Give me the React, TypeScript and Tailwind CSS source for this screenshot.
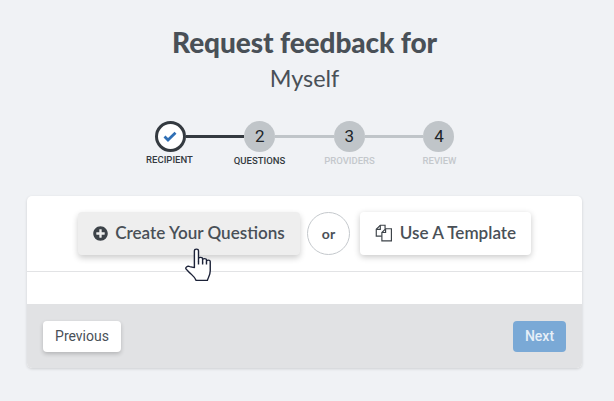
import { FaPlusCircle } from "react-icons/fa";

const steps = [
  { label: "RECIPIENT", color: "text-[#343a40]" },
  { label: "QUESTIONS", color: "text-[#343a40]" },
  { label: "PROVIDERS", color: "text-[#c4c8cc]" },
  { label: "REVIEW", color: "text-[#c4c8cc]" },
];

function Num({ n }: { n: number }) {
  return (
    <div className="flex h-[31px] w-[31px] shrink-0 items-center justify-center rounded-full bg-[#c0c5c9] font-['Roboto',sans-serif] text-[17px] font-normal text-[#212529]">
      {n}
    </div>
  );
}

export default function App() {
  return (
    <div className="h-[401px] w-[614px] overflow-hidden bg-[#f0f2f5]">
      <div className="flex w-[609px] flex-col items-center font-['Lato',sans-serif] text-[#495057]">
        <h1 className="mt-[23px] text-[28px] leading-[38px] font-black tracking-[-0.1px]">Request feedback for</h1>
        <div className="mt-[3px] text-[23.4px] leading-[28px]">Myself</div>

        <div className="mt-[29px] flex items-center">
          <div className="flex h-[31px] w-[31px] shrink-0 items-center justify-center rounded-full border-[3px] border-[#343a40] bg-white">
            <svg width="14" height="11" viewBox="0 0 14 11">
              <path d="M1.5 5.5 L5 9 L12.5 1.8" fill="none" stroke="#2f6fb5" strokeWidth="2.8" />
            </svg>
          </div>
          <div className="h-[3px] w-[58.67px] bg-[#343a40]" />
          <Num n={2} />
          <div className="h-[3px] w-[58.67px] bg-[#c0c5c9]" />
          <Num n={3} />
          <div className="h-[3px] w-[58.67px] bg-[#c0c5c9]" />
          <Num n={4} />
        </div>
        <div className="mt-[3px] flex font-['Roboto',sans-serif]">
          {steps.map((s, i) => (
            <div
              key={s.label}
              className={`w-[90px] text-center text-[9.5px] leading-[12px] font-medium ${s.color} ${i === 0 ? "mt-[-1px]" : ""}`}
            >
              {s.label}
            </div>
          ))}
        </div>

        <div className="mt-[29px] flex h-[172px] w-[555px] flex-col overflow-hidden rounded-[5px] bg-white shadow-[0_1px_3px_rgba(0,0,0,0.15)]">
          <div className="relative flex h-[76px] shrink-0 items-center justify-center border-b border-[#e2e3e5] pb-[1px]">
            <div className="flex h-[43px] w-[222px] items-center justify-center gap-[7px] rounded-[4px] bg-[#eeeeee] text-[17.1px] font-semibold shadow-[0_3px_6px_rgba(0,0,0,0.2)]">
              <FaPlusCircle className="h-[15px] w-[15px] text-[#3d4349]" />
              <span>Create Your Questions</span>
            </div>
            <div className="ml-[7px] mr-[10px] flex h-[43px] w-[43px] items-center justify-center rounded-full border border-[#c4c8cc] text-[14px] font-bold">
              or
            </div>
            <div className="flex h-[43px] w-[171px] items-center justify-center gap-[7px] rounded-[4px] bg-white text-[17.1px] font-semibold shadow-[0_2px_6px_rgba(0,0,0,0.22)]">
              <svg width="18" height="18" viewBox="0 0 17 17" fill="none" stroke="#3d4349" strokeWidth="1.1">
                <path d="M6.5 11.5 H1.2 V5 L5 1.2 H9.5 V4.5" />
                <path d="M5 1.2 V5 H1.2" />
                <path d="M6.5 16 V8 L10 4.5 H15.5 V16 Z" fill="#fff" />
                <path d="M10 4.5 V8 H6.5" />
              </svg>
              <span>Use A Template</span>
            </div>
            <svg
              className="absolute left-[158px] top-[52px]"
              width="27"
              height="33"
              viewBox="0 0 23 32"
              preserveAspectRatio="none"
              fill="#fff"
              stroke="#1c2238"
              strokeWidth="1.2"
              strokeLinejoin="round"
            >
              <path d="M8 19 V3 C8 0.6 11.5 0.6 11.5 3 V13 V10.5 C11.5 8.6 15 8.6 15 10.5 V13.5 V11.5 C15 9.8 18.3 9.8 18.3 11.5 V14 V13 C18.3 11.3 21.5 11.3 21.5 13 V22 C21.5 26 20 28 19 31.5 H9.5 C8.5 28 6 26.5 3.5 23.5 L1 20.5 C0 19 2 17 4 18 Z" />
              <path d="M11.5 13 V16 M15 13.5 V16 M18.3 14 V16" fill="none" />
            </svg>
          </div>
          <div className="h-[32px] shrink-0 bg-white" />
          <div className="flex flex-1 items-center justify-between bg-[#e1e2e4] px-[16px] font-['Roboto',sans-serif] text-[14px]">
            <div className="flex h-[31px] w-[78px] items-center justify-center rounded-[4px] bg-white text-[#495057] shadow-[0_2px_4px_rgba(0,0,0,0.2)]">
              Previous
            </div>
            <div className="flex h-[31px] w-[53px] items-center justify-center rounded-[4px] bg-[#7aa9d6] font-medium text-[#e6eff8]">
              Next
            </div>
          </div>
        </div>
      </div>
    </div>
  );
}
